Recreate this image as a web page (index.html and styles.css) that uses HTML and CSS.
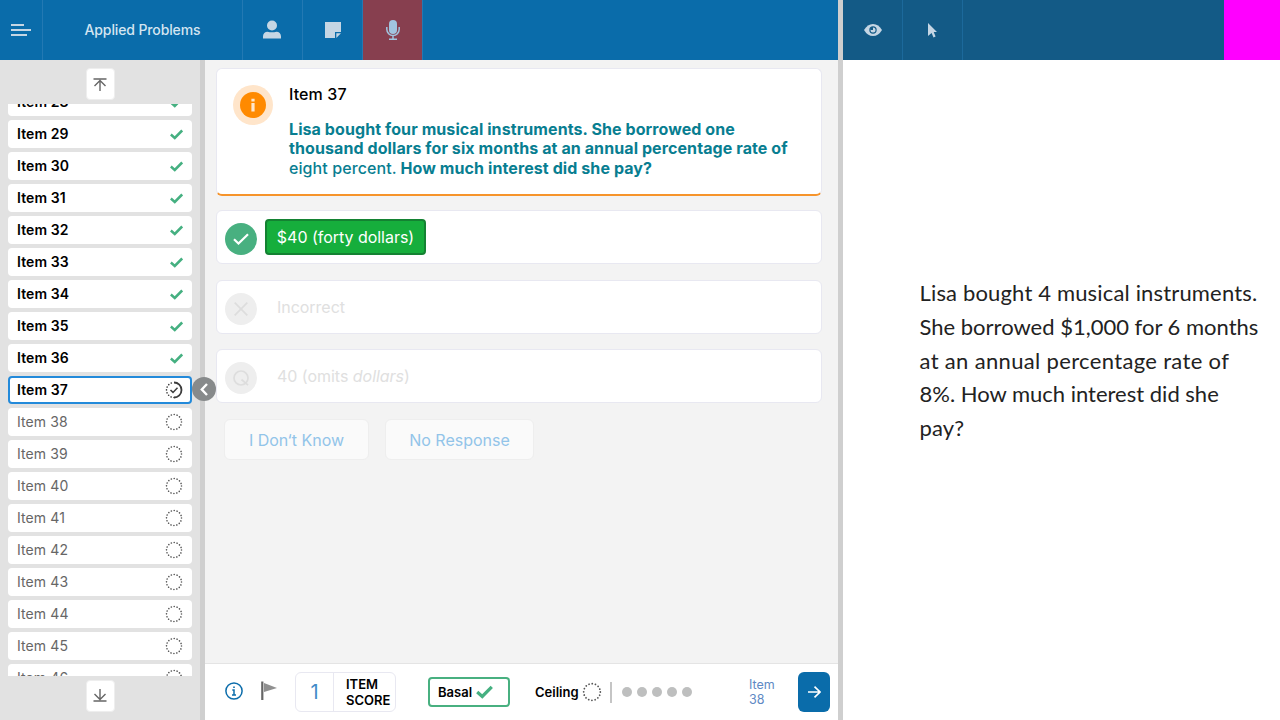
FILE: index.html
```html
<!DOCTYPE html>
<html lang="en">
<head>
<meta charset="utf-8">
<title>Applied Problems</title>
<link rel="stylesheet" href="styles.css">
</head>
<body>
<svg class="sprite" width="0" height="0">
  <symbol id="check" viewBox="0 0 12 10"><path d="M.8 5 4.400 8.200 11.200 1.300" fill="none" stroke="#45b081" stroke-width="2.300"/></symbol>
  <symbol id="dots" viewBox="0 0 18 18"><circle cx="9" cy="9" r="7.500" fill="none" stroke="#555" stroke-width="1.600" stroke-linecap="round" stroke-dasharray="0.010 2.935"/></symbol>
</svg>
<div class="app">
  <div class="test">
    <header class="topbar">
      <button class="tool menu"><svg width="20" height="12" viewBox="0 0 20 12" stroke="#c5d6e4" stroke-width="2"><path d="M0 1h13M0 6h20M0 11h16"/></svg></button>
      <h1 class="title">Applied Problems</h1>
      <button class="tool user"><svg width="18" height="20" viewBox="0 0 18 20" fill="#c5d6e4"><circle cx="9" cy="5.500" r="5"/><path d="M0 18.500v-2.300C0 13.500 2 11.700 4.500 11.700q4.500 1 9 0C16 11.700 18 13.500 18 16.200v2.300z"/></svg></button>
      <button class="tool"><svg width="16" height="16" viewBox="0 0 16 16" fill="#c5d6e4"><path d="M0 0h16v10h-6v6H0z"/><path d="M11.300 11.300H16L11.300 16z"/></svg></button>
      <button class="tool record"><svg width="14" height="20" viewBox="0 0 14 20"><rect x="3" y="0" width="8" height="14" rx="4" fill="#a1c4df"/><path d="M.8 7v2.300a6.200 6.200 0 0 0 12.400 0V7M7 15.500v3.500M3 19.200h8" fill="none" stroke="#a1c4df" stroke-width="1.500"/></svg></button>
    </header>
    <div class="workspace">
      <nav class="sidebar">
        <button class="jump"><svg width="14" height="14" viewBox="0 0 14 14" fill="none" stroke="#666" stroke-width="1.400"><path d="M.5 2h13M7 14V4M1.500 9 7 3.500 12.500 9"/></svg></button>
        <div class="list">
          <div class="row done"><span>Item 28</span><svg width="13" height="11"><use href="#check"/></svg></div>
          <div class="row done"><span>Item 29</span><svg width="13" height="11"><use href="#check"/></svg></div>
          <div class="row done"><span>Item 30</span><svg width="13" height="11"><use href="#check"/></svg></div>
          <div class="row done"><span>Item 31</span><svg width="13" height="11"><use href="#check"/></svg></div>
          <div class="row done"><span>Item 32</span><svg width="13" height="11"><use href="#check"/></svg></div>
          <div class="row done"><span>Item 33</span><svg width="13" height="11"><use href="#check"/></svg></div>
          <div class="row done"><span>Item 34</span><svg width="13" height="11"><use href="#check"/></svg></div>
          <div class="row done"><span>Item 35</span><svg width="13" height="11"><use href="#check"/></svg></div>
          <div class="row done"><span>Item 36</span><svg width="13" height="11"><use href="#check"/></svg></div>
          <div class="row current"><span>Item 37</span><svg width="18" height="18" viewBox="0 0 18 18" fill="none" stroke="#3c3c3c"><path d="M9 1.500a7.500 7.500 0 0 1 0 15" stroke-width="1.800"/><path d="M9 16.500a7.500 7.500 0 0 1 0-15" stroke-width="1.600" stroke-linecap="round" stroke-dasharray="0.010 2.935"/><path d="m5.500 9 2.500 2.400 4.500-4.600" stroke-width="1.500"/></svg></div>
          <div class="row"><span>Item 38</span><svg width="18" height="18"><use href="#dots"/></svg></div>
          <div class="row"><span>Item 39</span><svg width="18" height="18"><use href="#dots"/></svg></div>
          <div class="row"><span>Item 40</span><svg width="18" height="18"><use href="#dots"/></svg></div>
          <div class="row"><span>Item 41</span><svg width="18" height="18"><use href="#dots"/></svg></div>
          <div class="row"><span>Item 42</span><svg width="18" height="18"><use href="#dots"/></svg></div>
          <div class="row"><span>Item 43</span><svg width="18" height="18"><use href="#dots"/></svg></div>
          <div class="row"><span>Item 44</span><svg width="18" height="18"><use href="#dots"/></svg></div>
          <div class="row"><span>Item 45</span><svg width="18" height="18"><use href="#dots"/></svg></div>
          <div class="row"><span>Item 46</span><svg width="18" height="18"><use href="#dots"/></svg></div>
        </div>
        <button class="jump"><svg width="14" height="14" viewBox="0 0 14 14" fill="none" stroke="#666" stroke-width="1.400"><path d="M.5 12h13M7 0v10M1.500 5 7 10.500 12.500 5"/></svg></button>
      </nav>
      <div class="splitter">
        <button class="collapse"><svg width="8" height="13" viewBox="0 0 8 13" fill="none" stroke="#fff" stroke-width="2.400"><path d="M7 1 1.800 6.500 7 12"/></svg></button>
      </div>
      <main class="main">
        <div class="content">
          <section class="question">
            <span class="info"><svg width="26" height="26" viewBox="0 0 26 26"><circle cx="13" cy="13" r="13" fill="#ff8a00"/><path d="M11.400 11h3.200v8.500h-3.200zM11.400 6.800h3.200v2.600h-3.200z" fill="#ffe6cc"/></svg></span>
            <div>
              <h2>Item 37</h2>
              <p>Lisa bought four musical instruments. She borrowed one<br>thousand dollars for six months at an annual percentage rate of<br><span>eight percent.</span> How much interest did she pay?</p>
            </div>
          </section>
          <section class="answer correct">
            <span class="mark"><svg width="16" height="12" viewBox="0 0 16 12" fill="none" stroke="#fff" stroke-width="2.200"><path d="M1 6.200 5.500 10.500 15 1.200"/></svg></span>
            <span class="chip">$40 (forty dollars)</span>
          </section>
          <section class="answer">
            <span class="mark"><svg width="14" height="14" viewBox="0 0 14 14" stroke="#ddd" stroke-width="1.700"><path d="m.7.7 12.600 12.600M13.300.7.7 13.300"/></svg></span>
            <span class="label">Incorrect</span>
          </section>
          <section class="answer query">
            <span class="mark"><svg width="16" height="16" viewBox="0 0 16 16" fill="none" stroke="#ddd" stroke-width="1.700"><circle cx="8" cy="8" r="7"/><path d="m8.500 9.500 6.500 5.700"/></svg></span>
            <span class="label">40 (omits <i>dollars</i>)</span>
          </section>
          <div class="actions">
            <button class="idk">I Don‘t Know</button>
            <button class="none">No Response</button>
          </div>
        </div>
        <footer class="footer">
          <svg class="about" width="18" height="18" viewBox="0 0 18 18" fill="none" stroke="#0c6dab" stroke-width="1.500"><circle cx="9" cy="9" r="8.100"/><path d="M7.300 8H9v5M7 13h4M8.200 5.200h1.600"/></svg>
          <svg class="flag" width="16" height="20" viewBox="0 0 16 20"><path d="M3 2 16 7 3 11z" fill="#909090"/><path d="M1.300.5V19" stroke="#666" stroke-width="2.200"/></svg>
          <div class="score"><span class="num">1</span><span class="caption">ITEM<br>SCORE</span></div>
          <div class="basal">Basal<svg width="17" height="14"><use href="#check"/></svg></div>
          <div class="ceiling">Ceiling<svg width="20" height="20"><use href="#dots"/></svg></div>
          <div class="progress"><i></i><i></i><i></i><i></i><i></i></div>
          <div class="upcoming">Item<br>38</div>
          <button class="next"><svg width="13" height="12" viewBox="0 0 13 12" fill="none" stroke="#fff" stroke-width="1.600"><path d="M0 6h12M6.500.6 12 6l-5.500 5.400"/></svg></button>
        </footer>
      </main>
    </div>
  </div>
  <div class="divider"></div>
  <aside class="student">
    <header class="student-bar">
      <button class="view"><svg width="18" height="12" viewBox="0 0 18 12"><path d="M0 6Q3.500 0 9 0t9 6q-3.500 6-9 6T0 6z" fill="#c5d6e4"/><circle cx="9" cy="6" r="3.700" fill="#135a86"/><circle cx="9" cy="6" r="2.500" fill="#c5d6e4"/><path d="M9 3v3H6.300A3 3 0 0 1 9 3z" fill="#135a86"/></svg></button>
      <button class="pointer"><svg width="9" height="15" viewBox="0 0 9 15" fill="#c5d6e4"><path d="M0 0 9 9H5.700L7.600 13.500 5.500 14.400 3.600 10 0 13z"/></svg></button>
      <span class="swatch"></span>
    </header>
    <p class="stimulus"><span class="medium">Lisa bought 4 musical instruments.</span><br>She borrowed $1,000 for 6 months<br><span class="wide">at an annual percentage rate of</span><br>8%. How much interest did she<br><span class="medium">pay?</span></p>
  </aside>
</div>
</body>
</html>
```
FILE: styles.css
```css
* { box-sizing: border-box; }
body { margin: 0; font-family: Inter, "Liberation Sans", sans-serif; color: #000; }
button { font: inherit; border: 0; padding: 0; background: none; display: flex; align-items: center; justify-content: center; }
svg { display: block; flex: none; }
h1, h2, p { margin: 0; }
.sprite { position: absolute; }
.app { display: flex; width: 1280px; height: 720px; overflow: hidden; }
.test { width: 838px; flex: none; display: flex; flex-direction: column; }
.topbar { height: 60px; display: flex; background: #0a6caa; flex: none; }
.tool { width: 60px; border-right: 1px solid #2379b3; }
.menu { width: 43px; }
.user { padding-right: 1px; }
.title { width: 200px; display: flex; align-items: center; justify-content: center; padding-bottom: 1px; font-size: 14px; font-weight: 500; letter-spacing: -.12px; color: #d4e5f1; border-right: 1px solid #2379b3; }
.record { background: #873f4f; }
.workspace { display: flex; flex: 1; min-height: 0; }
.sidebar { width: 200px; background: #e2e2e2; display: flex; flex-direction: column; align-items: center; padding: 8px; }
.jump { width: 29px; height: 32px; flex: none; background: #fff; border: 1px solid #eee; border-radius: 4px; }
.list { width: 184px; height: 572px; margin: 4px 0; overflow: hidden; display: flex; flex-direction: column; justify-content: center; gap: 4px; }
.row { height: 28px; flex: none; background: #fff; border-radius: 4px; padding: 0 9px; display: flex; align-items: center; justify-content: space-between; font-size: 14px; letter-spacing: .1px; color: #666; }
.row span { padding-bottom: 1px; }
.done, .current { color: #000; font-weight: 600; }
.current { border: 2px solid #238ada; padding: 0 7px; }
.splitter { width: 5px; background: #cfcfcf; position: relative; }
.collapse { position: absolute; left: -8px; top: 317px; width: 24px; height: 24px; border-radius: 50%; background: #878a8b; z-index: 1; }
.main { flex: 1; display: flex; flex-direction: column; background: #f3f3f3; }
.content { flex: 1; padding: 8px 16px 0 11px; display: flex; flex-direction: column; }
.question { height: 128px; background: #fff; border: 1px solid #e8e8f1; border-bottom: 2px solid #f6942b; border-radius: 6px; padding: 15px 16px; display: flex; gap: 16px; }
.info { width: 40px; height: 40px; flex: none; border-radius: 50%; background: #ffe5ca; display: flex; align-items: center; justify-content: center; margin-top: 1px; }
h2 { font-size: 16px; line-height: 20px; font-weight: 500; letter-spacing: .1px; }
.question p { margin-top: 15.600px; font-size: 16px; line-height: 19.500px; font-weight: 700; letter-spacing: .09px; color: #087e91; white-space: nowrap; }
.question p span { font-weight: 500; }
.answer { height: 54px; margin-top: 16px; background: #fff; border: 1px solid #e8e8f1; border-radius: 6px; display: flex; align-items: center; padding-left: 8px; gap: 20px; font-size: 16px; letter-spacing: -.03px; color: #e0e0e0; }
.correct { margin-top: 14px; gap: 8px; }
.query { margin-top: 15px; }
.mark { width: 32px; height: 32px; margin-top: 3px; border-radius: 50%; background: #eee; display: flex; align-items: center; justify-content: center; }
.correct .mark { background: #48b080; }
.chip { height: 36px; width: 161px; border: 2px solid #148232; border-radius: 4px; background: #16ae3c; color: #fff; display: flex; align-items: center; justify-content: center; }
.actions { display: flex; gap: 16px; margin: 16px 0 0 8px; }
.actions button { height: 41px; width: 145px; border: 1px solid #eee; border-radius: 6px; background: #fafafa; color: #92c4e9; font-size: 16px; }
.actions .none { width: 149px; }
.footer { height: 57px; background: #fff; border-top: 1px solid #e4e4e4; display: flex; align-items: center; padding: 0 8px 0 20px; font-size: 13px; }
.about, .flag { margin-bottom: 2px; }
.flag { margin-left: 18px; }
.score { width: 101px; height: 40px; margin-left: 18px; border: 1px solid #e8e8f1; border-radius: 6px; display: flex; }
.num { width: 38px; border-right: 1px solid #e8e8f1; display: flex; align-items: center; justify-content: center; font-size: 20px; color: #428bc8; }
.caption { padding: 3px 0 0 12px; font-weight: 600; line-height: 16px; white-space: nowrap; }
.basal { width: 82px; height: 30px; margin-left: 32px; border: 2px solid #48b080; border-radius: 4px; padding-left: 8px; display: flex; align-items: center; gap: 4px; font-weight: 600; }
.ceiling { display: flex; align-items: center; margin-left: 25px; gap: 3px; font-weight: 600; }
.progress { height: 21px; margin-left: 8px; border-left: 2px solid #c5c5c5; padding-left: 10px; display: flex; align-items: center; gap: 5px; }
.progress i { width: 10px; height: 10px; border-radius: 50%; background: #bebfbf; }
.upcoming { margin-left: auto; width: 49px; font-size: 12.500px; color: #6089c4; line-height: 15px; }
.next { width: 32px; height: 40px; border-radius: 6px; background: #0a6caa; }
.divider { width: 5px; flex: none; background: #cfcfcf; }
.student { flex: 1; background: #fff; }
.student-bar { height: 60px; display: flex; background: #135a86; }
.student-bar button { width: 60px; border-right: 1px solid #1c699b; }
.swatch { width: 56px; margin-left: auto; background: #f0f; }
.stimulus { margin: 216px 0 0 76.500px; font-family: Lato, "Liberation Sans", sans-serif; font-size: 22px; line-height: 33.800px; color: #222; white-space: nowrap; }
.medium { letter-spacing: .16px; }
.wide { letter-spacing: .34px; }
```
